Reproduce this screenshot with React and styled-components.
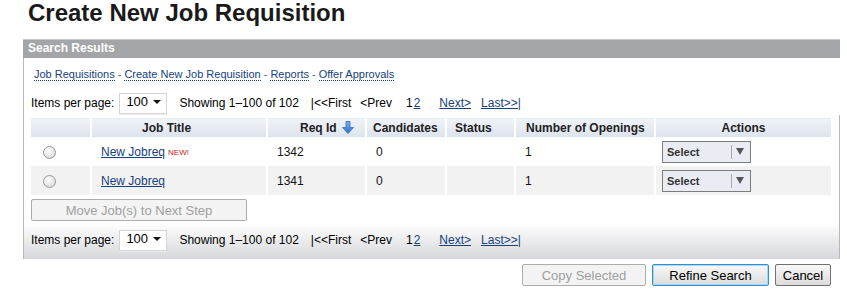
import styled, { createGlobalStyle } from "styled-components";

const GlobalStyle = createGlobalStyle`
  body {
    margin: 0;
    background: #fff;
    font-family: "Liberation Sans", Arial, sans-serif;
    color: #000;
  }
`;

const Page = styled.div`
  width: 847px;
  height: 295px;
  padding: 0 0 0 23px;
  box-sizing: border-box;
  overflow: hidden;
`;

const Title = styled.h1`
  margin: 0 0 0 5px;
  font-size: 24px;
  line-height: 25px;
  font-weight: bold;
  color: #1a1a1a;
  height: 39px;
`;

const Panel = styled.div`
  width: 817px;
  border-left: 1px solid #b8b8b8;
  box-sizing: border-box;
`;

const PanelBar = styled.div`
  height: 18px;
  background: #a4a5a8;
  border-top: 1px solid #c9c9cb;
  color: #fff;
  font-weight: bold;
  font-size: 12px;
  line-height: 17px;
  padding-left: 5px;
  margin-left: -1px;
`;

const PanelBody = styled.div`
  padding: 8px 8px 0 7px;
  background: linear-gradient(to bottom, #fff 0, #fff 165px, #d6d7da 201px);
  height: 201px;
  box-sizing: border-box;
  border-style: solid;
  border-width: 0 1px 0 0;
  border-image: linear-gradient(to bottom, transparent 0, transparent 57px, #b8b8b8 57px) 1;
`;

const LinkRow = styled.div`
  display: flex;
  align-items: center;
  gap: 3px;
  padding-left: 3px;
  height: 16px;
  font-size: 11px;
  color: #666;
`;

const NavLink = styled.a`
  color: #16417e;
  text-decoration: none;
  border-bottom: 1px dotted #16417e;
  line-height: 12px;
`;

const Pager = styled.div`
  display: flex;
  align-items: center;
  height: 22px;
  font-size: 12px;
  margin-top: ${(p) => p.$top}px;
`;

const PerPageSelect = styled.div`
  width: 48px;
  height: 21px;
  box-sizing: border-box;
  border: 1px solid #d4d4d4;
  box-shadow: 0 1px 0 #eee;
  margin: 0 12px 0 5px;
  display: flex;
  align-items: center;
  justify-content: space-between;
  padding: 0 5px 3px 6px;
  font-size: 13px;
  background: #fff;
`;

const Caret = styled.span`
  width: 0;
  height: 0;
  border-left: 4px solid transparent;
  border-right: 4px solid transparent;
  border-top: 4px solid #111;
`;

const PageItem = styled.span`
  margin-right: ${(p) => p.$gap}px;
`;

const PageLink = styled.a`
  color: #16417e;
  text-decoration: underline;
  margin-right: ${(p) => p.$gap}px;
`;

const Table = styled.table`
  width: 800px;
  border-collapse: collapse;
  margin-top: 3px;
  font-size: 12px;
`;

const Th = styled.th`
  height: 19px;
  padding: 0;
  font-weight: bold;
  color: #222;
  text-align: ${(p) => (p.$pad ? "left" : "center")};
  padding-left: ${(p) => p.$pad || 0}px;
  background: linear-gradient(to bottom, #f0f3f8, #dce3ec);
  border-left: 2px solid #fff;
  border-top: 1px solid #fff;
  white-space: nowrap;
  &:first-child {
    border-left: 0;
  }
`;

const Tr = styled.tr`
  background: ${(p) => (p.$alt ? "#f2f2f2" : "#fff")};
`;

const Td = styled.td`
  height: 29px;
  padding: 0 0 0 ${(p) => p.$pad ?? 9}px;
  border-left: 2px solid #fff;
  vertical-align: middle;
  color: #111;
  &:first-child {
    border-left: 0;
  }
`;

const Radio = styled.span`
  display: block;
  width: 11px;
  height: 11px;
  margin: 2px 0 0 12px;
  border-radius: 50%;
  border: 1px solid #9a9a9a;
  background: radial-gradient(circle at 40% 35%, #fff 0, #e4e4e4 60%, #c8c8c8 100%);
`;

const JobLink = styled.a`
  color: #16417e;
  text-decoration: underline;
  font-size: 12px;
`;

const NewTag = styled.span`
  color: #d02020;
  font-size: 8px;
  margin-left: 3px;
  vertical-align: 1px;
`;

const ActionSelect = styled.div`
  width: 89px;
  height: 22px;
  box-sizing: border-box;
  border: 1px solid #7c7c7c;
  background: #e9edf3;
  display: flex;
  align-items: center;
  font-size: 11px;
  font-weight: bold;
  color: #333;
  margin-left: -3px;
`;

const ActionLabel = styled.span`
  flex: 1;
  padding-left: 4px;
`;

const ActionArrow = styled.span`
  width: 16px;
  height: 14px;
  border-left: 1px solid #aaa;
  display: flex;
  align-items: center;
  justify-content: center;
  margin-right: 2px;
  &::after {
    content: "";
    border-left: 4px solid transparent;
    border-right: 4px solid transparent;
    border-top: 7px solid #555;
  }
`;

const Button = styled.button`
  font-family: "Liberation Sans", Arial, sans-serif;
  font-size: 13px;
  height: 22px;
  padding: 0;
  border-radius: 2px;
  cursor: pointer;
  background: ${(p) =>
    p.$disabled ? "#f3f3f3" : "linear-gradient(to bottom, #f8f8f8, #dcdcdc)"};
  border: 1px solid ${(p) => (p.$primary ? "#2f8fd3" : p.$disabled ? "#acacac" : "#707070")};
  box-shadow: ${(p) => (p.$primary ? "inset 0 0 0 1px #a8d6f5" : "none")};
  color: ${(p) => (p.$disabled ? "#a0a0a0" : "#000")};
  width: ${(p) => p.$w}px;
`;

const MoveRow = styled.div`
  margin-top: 4px;
`;

const Footer = styled.div`
  width: 808px;
  display: flex;
  justify-content: flex-end;
  gap: 6px;
  margin-top: 5px;
`;

function SortIcon() {
  return (
    <svg width="12" height="13" viewBox="0 0 12 13" style={{ verticalAlign: "-2px", marginLeft: 5 }}>
      <defs>
        <linearGradient id="sg" x1="0" x2="0" y1="0" y2="1">
          <stop offset="0" stopColor="#7db3ea" />
          <stop offset="1" stopColor="#2a72c8" />
        </linearGradient>
      </defs>
      <path d="M4 0.5h4v6h3.5L6 12.5 0.5 6.5H4z" fill="url(#sg)" stroke="#2f6db8" strokeWidth="0.8" />
    </svg>
  );
}

function Pagination({ top }) {
  return (
    <Pager $top={top}>
      <span>Items per page:</span>
      <PerPageSelect>
        100 <Caret />
      </PerPageSelect>
      <PageItem $gap={12}>Showing 1–100 of 102</PageItem>
      <PageItem $gap={9}>|&lt;&lt;First</PageItem>
      <PageItem $gap={14}>&lt;Prev</PageItem>
      <PageItem $gap={1}>1</PageItem>
      <PageLink $gap={19}>2</PageLink>
      <PageLink $gap={10}>Next&gt;</PageLink>
      <PageLink $gap={0}>Last&gt;&gt;|</PageLink>
    </Pager>
  );
}

const rows = [
  { id: "1342", isNew: true },
  { id: "1341", isNew: false },
];

export default function App() {
  return (
    <Page>
      <GlobalStyle />
      <Title>Create New Job Requisition</Title>
      <Panel>
        <PanelBar>Search Results</PanelBar>
        <PanelBody>
          <LinkRow>
            <NavLink>Job Requisitions</NavLink>-
            <NavLink>Create New Job Requisition</NavLink>-
            <NavLink>Reports</NavLink>-
            <NavLink>Offer Approvals</NavLink>
          </LinkRow>
          <Pagination top={10} />
          <Table>
            <colgroup>
              <col style={{ width: 60 }} />
              <col style={{ width: 176 }} />
              <col style={{ width: 99 }} />
              <col style={{ width: 80 }} />
              <col style={{ width: 69 }} />
              <col style={{ width: 140 }} />
              <col style={{ width: 176 }} />
            </colgroup>
            <thead>
              <tr>
                <Th />
                <Th $pad={50}>Job Title</Th>
                <Th $pad={32}>
                  Req Id
                  <SortIcon />
                </Th>
                <Th $pad={6}>Candidates</Th>
                <Th $pad={8}>Status</Th>
                <Th $pad={10}>Number of Openings</Th>
                <Th>Actions</Th>
              </tr>
            </thead>
            <tbody>
              {rows.map((r, i) => (
                <Tr key={r.id} $alt={i % 2 === 1}>
                  <Td $pad={0}>
                    <Radio />
                  </Td>
                  <Td>
                    <JobLink>New Jobreq</JobLink>
                    {r.isNew && <NewTag>NEW!</NewTag>}
                  </Td>
                  <Td>{r.id}</Td>
                  <Td>0</Td>
                  <Td />
                  <Td>1</Td>
                  <Td>
                    <ActionSelect>
                      <ActionLabel>Select</ActionLabel>
                      <ActionArrow />
                    </ActionSelect>
                  </Td>
                </Tr>
              ))}
            </tbody>
          </Table>
          <MoveRow>
            <Button $disabled $w={216}>Move Job(s) to Next Step</Button>
          </MoveRow>
          <Pagination top={8} />
        </PanelBody>
      </Panel>
      <Footer>
        <Button $disabled $w={124}>Copy Selected</Button>
        <Button $primary $w={117}>Refine Search</Button>
        <Button $w={56}>Cancel</Button>
      </Footer>
    </Page>
  );
}
